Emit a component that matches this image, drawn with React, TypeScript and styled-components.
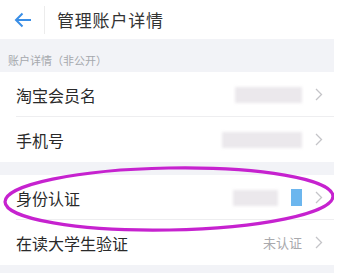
import styled, { createGlobalStyle } from "styled-components";

const GlobalStyle = createGlobalStyle`
  body {
    margin: 0;
    background: #fff;
    font-family: "Noto Sans CJK SC", "Noto Sans", sans-serif;
  }
`;

const Page = styled.div`
  position: relative;
  width: 334px;
  height: 273px;
  overflow: hidden;
  background: #fff;
`;

const Header = styled.div`
  display: flex;
  align-items: center;
  height: 39px;
`;
const BackBtn = styled.div`
  width: 45px;
  height: 28px;
  display: flex;
  align-items: center;
  justify-content: center;
  border-right: 1px solid #ececec;
  padding-left: 2px;
  box-sizing: border-box;
`;
const Title = styled.div`
  margin-left: 12px;
  font-size: 17px;
  color: #333;
  letter-spacing: 0.8px;
`;

const SectionLabel = styled.div`
  height: 33px;
  background: #f2f3f7;
  box-sizing: border-box;
  padding: 13px 0 0 8px;
  font-size: 11px;
  color: #a5a8ad;
`;
const Gap = styled.div<{ $h: number }>`
  height: ${(p) => p.$h}px;
  background: #f2f3f7;
`;

const Row = styled.div<{ $line?: boolean }>`
  height: 45px;
  display: flex;
  align-items: center;
  padding-left: 16px;
  position: relative;
  ${(p) =>
    p.$line &&
    `&::after {
      content: "";
      position: absolute;
      left: 16px;
      right: 0;
      bottom: 0;
      height: 1px;
      background: #eeeef0;
    }`}
`;
const Label = styled.div`
  flex: 1;
  font-size: 16px;
  color: #2a2a2a;
`;
const Blur = styled.div<{ $w: number }>`
  width: ${(p) => p.$w}px;
  height: 16px;
  background: #ebe8ec;
  filter: blur(1.5px);
`;
const Blue = styled.div`
  width: 11px;
  height: 17px;
  margin-left: 13px;
  background: #6cb6ee;
`;
const Hint = styled.div`
  font-size: 13px;
  color: #a9a9ad;
`;
const Chevron = styled.div`
  width: 30px;
  display: flex;
  justify-content: center;
  margin-left: 2px;
`;

const Ring = styled.svg`
  position: absolute;
  left: 0;
  top: 160px;
  pointer-events: none;
`;

const Arr = () => (
  <Chevron>
    <svg width="8" height="13" viewBox="0 0 8 13">
      <path d="M1 1l5.5 5.5L1 12" fill="none" stroke="#c4c4c8" strokeWidth="1.3" />
    </svg>
  </Chevron>
);

export default function App() {
  return (
    <Page>
      <GlobalStyle />
      <Header>
        <BackBtn>
          <svg width="18" height="16" viewBox="0 0 18 16">
            <path d="M17 8H2M8.5 1.5L2 8l6.5 6.5" fill="none" stroke="#3a8ee6" strokeWidth="2" />
          </svg>
        </BackBtn>
        <Title>管理账户详情</Title>
      </Header>
      <SectionLabel>账户详情（非公开）</SectionLabel>
      <Row $line>
        <Label>淘宝会员名</Label>
        <Blur $w={67} />
        <Arr />
      </Row>
      <Row>
        <Label>手机号</Label>
        <Blur $w={80} />
        <Arr />
      </Row>
      <Gap $h={13} />
      <Row $line>
        <Label>身份认证</Label>
        <Blur $w={45} />
        <Blue />
        <Arr />
      </Row>
      <Row>
        <Label>在读大学生验证</Label>
        <Hint>未认证</Hint>
        <Arr />
      </Row>
      <Gap $h={10} />
      <Ring width="341" height="80" viewBox="0 0 341 80">
        <ellipse cx="169" cy="39" rx="164" ry="31" fill="none" stroke="#c622cf" strokeWidth="3.2" transform="rotate(-1 169 39)" />
      </Ring>
    </Page>
  );
}
